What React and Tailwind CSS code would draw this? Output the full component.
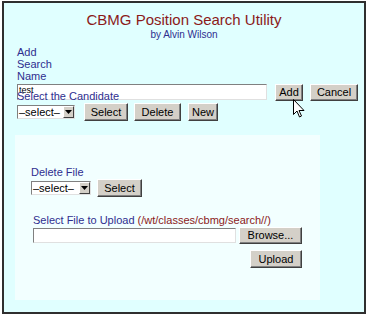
import React from 'react';

const btn =
  'flex items-center justify-center bg-[#d4d0c8] text-[11px] text-black border border-t-white border-l-white border-r-[#404040] border-b-[#404040] shadow-[inset_-1px_-1px_0_#808080]';

function Button({ w, h = 'h-[18px]', children }) {
  return <div className={`${btn} ${w} ${h}`}>{children}</div>;
}

function Dropdown({ w }) {
  return (
    <div className={`flex h-[14px] ${w} items-stretch bg-white border border-t-[#808080] border-l-[#808080] border-r-[#e0e0e0] border-b-[#e0e0e0]`}>
      <span className="flex-1 pl-[1px] text-[11px] leading-[12px] text-black">–select–</span>
      <span className="flex w-[11px] items-center justify-center bg-[#d4d0c8] border border-t-white border-l-white border-r-[#404040] border-b-[#404040]">
        <svg width="7" height="4" viewBox="0 0 7 4"><path d="M0 0h7L3.5 4z" fill="#000" /></svg>
      </span>
    </div>
  );
}

export default function App() {
  return (
    <div className="w-[368px] h-[315px] bg-white pt-[1px] pl-[2px] font-['Liberation_Sans',Arial,sans-serif]">
      <div className="relative w-[364px] h-[313px] border-2 border-[#2f2f2f] bg-[#e0ffff]">
        <div className="pt-[8px] text-center">
          <div className="text-[15px] leading-[17px] text-[#8b1a1a]">CBMG Position Search Utility</div>
          <div className="mt-[1px] text-[10px] leading-[12px] text-[#2e2e8f]">by Alvin Wilson</div>
        </div>

        <div className="pl-[13px] text-[11px] text-[#2e2e8f]">
          <div className="mt-[5px] leading-[12px]">
            Add<br />Search<br />Name
          </div>

          <div className="mt-[2px] flex items-start">
            <input
              readOnly
              value="test"
              className="h-[16px] w-[250px] bg-white px-[1px] pt-0 pb-[4px] text-[9px] text-black border border-t-[#808080] border-l-[#808080] border-r-[#e0e0e0] border-b-[#e0e0e0] outline-none"
            />
            <div className="ml-[8px]"><Button w="w-[28px]" h="h-[17px]">Add</Button></div>
            <div className="ml-[7px]"><Button w="w-[48px]" h="h-[17px]">Cancel</Button></div>
          </div>

          <div className="relative mt-[-11px] leading-[12px]">Select the Candidate</div>

          <div className="mt-[1px] flex items-center">
            <Dropdown w="w-[58px]" />
            <div className="ml-[9px]"><Button w="w-[44px]">Select</Button></div>
            <div className="ml-[6px]"><Button w="w-[47px]">Delete</Button></div>
            <div className="ml-[7px]"><Button w="w-[30px]">New</Button></div>
          </div>
        </div>

        <div className="ml-[11px] mt-[14px] h-[165px] w-[305px] bg-[#f2ffff] pl-[16px] pt-[31px] text-[11px] text-[#2e2e8f]">
          <div className="leading-[12px]">Delete File</div>
          <div className="mt-[1px] flex items-center">
            <Dropdown w="w-[60px]" />
            <div className="ml-[6px]"><Button w="w-[45px]">Select</Button></div>
          </div>

          <div className="ml-[2px] mt-[17px]">
            <div className="leading-[12px]">
              Select File to Upload <span className="text-[#8b1a1a]">(/wt/classes/cbmg/search//)</span>
            </div>
            <div className="mt-[1px] flex items-center">
              <div className="h-[15px] w-[203px] bg-white border border-t-[#808080] border-l-[#808080] border-r-[#e0e0e0] border-b-[#e0e0e0]" />
              <div className="ml-[3px]"><Button w="w-[63px]" h="h-[17px]">Browse...</Button></div>
            </div>
            <div className="ml-[217px] mt-[6px]"><Button w="w-[52px]">Upload</Button></div>
          </div>
        </div>

        <svg className="absolute left-[289px] top-[96px]" width="12" height="19" viewBox="0 0 12 19">
          <path d="M0.5 0.5v15l3.5-3.5 2.5 6 2-1-2.5-5.5h5z" fill="#fff" stroke="#000" strokeWidth="1" strokeLinejoin="miter" />
        </svg>
      </div>
    </div>
  );
}
